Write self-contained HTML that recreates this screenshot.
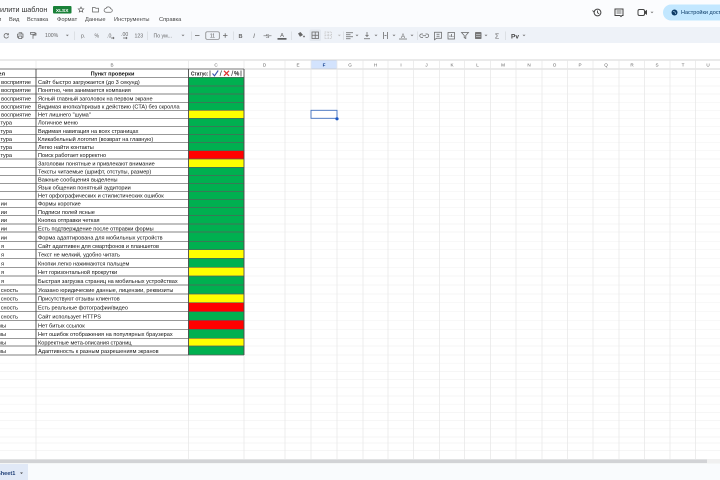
<!DOCTYPE html>
<html lang="ru">
<head>
<meta charset="utf-8">
<title>Sheet</title>
<style>
html,body{margin:0;padding:0;width:720px;height:480px;overflow:hidden;background:#fff}
svg{display:block;position:absolute;left:0;top:0;filter:blur(.25px)}
text{font-family:"Liberation Sans",sans-serif}
.t{font-size:5.58px;fill:#111}
.a{font-size:5.58px;fill:#111;text-anchor:end}
.h{font-size:4.6px;fill:#666;text-anchor:middle}
.m{font-size:5.7px;fill:#444}
.tb{font-size:5.2px;fill:#666}
.ic{fill:none;stroke:#666;stroke-width:.75}
.car{fill:#777}
.sep{stroke:#d5d9dd;stroke-width:.7}
</style>
</head>
<body>
<svg width="720" height="480" viewBox="0 0 720 480" xmlns="http://www.w3.org/2000/svg">
<!-- chrome backgrounds -->
<rect x="0" y="0" width="720" height="27" fill="#fbfcfe"/>
<rect x="0" y="27" width="720" height="16" fill="#eef2f8"/>
<rect x="0" y="43" width="720" height="17" fill="#fff"/>

<!-- title -->
<text x="0" y="12" font-size="7.200" fill="#333">илити шаблон</text>
<rect x="53" y="6" width="18.500" height="7.500" rx="1" fill="#188038"/>
<text x="62.200" y="11.800" font-size="4.800" font-weight="bold" fill="#fff" text-anchor="middle">XLSX</text>
<path class="ic" d="M81 7l.8 1.700 1.900.2-1.400 1.300.4 1.800-1.700-.9-1.700.9.400-1.800-1.400-1.300 1.900-.2z"/>
<path class="ic" d="M92.500 7.500h2.500l.8.8h2.700v3.700h-6z"/>
<path class="ic" d="M106 12.200h4.500a1.700 1.700 0 0 0 .2-3.400 2.500 2.500 0 0 0-4.700-.4 1.900 1.900 0 0 0 0 3.800z"/>

<!-- menu -->
<text class="m" x="-2" y="21">л</text>
<text class="m" x="9" y="21">Вид</text>
<text class="m" x="27" y="21">Вставка</text>
<text class="m" x="57" y="21">Формат</text>
<text class="m" x="85" y="21">Данные</text>
<text class="m" x="114" y="21">Инструменты</text>
<text class="m" x="159" y="21">Справка</text>

<!-- top right -->
<circle cx="597.500" cy="12.500" r="3.400" fill="none" stroke="#444" stroke-width="1"/>
<path d="M597.500 10.500v2.300l1.600 1M592.500 10.500l1.500 1.600 1-1.800" fill="none" stroke="#444" stroke-width=".9"/>
<path d="M615 9h8v6.500h-1l-1 1-1-1h-5z" fill="none" stroke="#444" stroke-width="1"/>
<path d="M616.500 11h5M616.500 13h5" stroke="#444" stroke-width=".8"/>
<rect x="638" y="9.500" width="6.500" height="6" rx="1.500" fill="none" stroke="#444" stroke-width="1"/>
<path d="M644.500 11.500l2.500-1.700v5.200l-2.500-1.700z" fill="#444"/>
<path class="car" d="M650.500 11.800h3l-1.500 1.500z"/>
<rect x="663" y="4.500" width="80" height="16" rx="8" fill="#c2e7ff"/>
<circle cx="674.500" cy="12.500" r="3" fill="#0b3a66"/>
<path d="M673 11.500l2 .5.500 2" stroke="#c2e7ff" stroke-width=".6" fill="none"/>
<text x="681" y="14" font-size="5.500" fill="#0b3a66">Настройки дост</text>

<!-- toolbar -->
<g>
<path class="ic" d="M8 34.200a2.300 2.300 0 1 0 .5 2.300M8.400 33.200v1.700h-1.700"/>
<path class="ic" d="M17.500 34h5.500v3.300h-1.200M18.700 37.300h-1.200V34M18.700 32.800h3.100V34M18.700 36h3.100v2.500h-3.100z"/>
<path class="ic" d="M30.500 32.500h4.500v1.800h-4.500zM35 33.300h1v1.800h-3v1M33 36.100v2.700" stroke-width="1"/>
<text class="tb" x="45" y="37.200">100%</text>
<path class="car" d="M65.800 34.800h3l-1.500 1.500z"/>
<line class="sep" x1="74.500" y1="31.500" x2="74.500" y2="40"/>
<text class="tb" x="81" y="37.300">р.</text>
<text class="tb" x="94.500" y="37.300">%</text>
<text class="tb" x="107" y="37.300">.0</text>
<path class="ic" d="M111 38h3M113 37l1 1-1 1" stroke-width=".6"/>
<text class="tb" x="121" y="36" font-size="4.600">.00</text>
<path class="ic" d="M123 38h4M126 37l1 1-1 1" stroke-width=".6"/>
<text class="tb" x="134.500" y="37.300" font-size="4.700">123</text>
<line class="sep" x1="147.500" y1="31.500" x2="147.500" y2="40"/>
<text class="tb" x="153.500" y="37.300">По ум...</text>
<path class="car" d="M181.500 34.800h3l-1.500 1.500z"/>
<line class="sep" x1="191.500" y1="31.500" x2="191.500" y2="40"/>
<path d="M195 35.500h4.500" stroke="#666" stroke-width=".8"/>
<rect x="205.800" y="31.800" width="13.500" height="7.500" rx="1.300" fill="none" stroke="#777" stroke-width=".7"/>
<text x="212.500" y="37.300" font-size="5" fill="#555" text-anchor="middle">11</text>
<path d="M223 35.500h4.500M225.200 33.200v4.600" stroke="#666" stroke-width=".8"/>
<line class="sep" x1="233.500" y1="31.500" x2="233.500" y2="40"/>
<text x="240.500" y="37.800" font-size="5.600" font-weight="bold" fill="#666" text-anchor="middle">B</text>
<text x="254" y="37.800" font-size="6.500" font-style="italic" font-family="Liberation Serif" fill="#666" text-anchor="middle">I</text>
<text x="267.500" y="37.800" font-size="5.600" fill="#666" text-anchor="middle">S</text>
<path d="M263.500 35.800h8" stroke="#666" stroke-width=".6"/>
<text x="282" y="37" font-size="5.800" fill="#666" text-anchor="middle">A</text>
<rect x="277.500" y="38.300" width="9" height="1.200" fill="#222"/>
<line class="sep" x1="291.500" y1="31.500" x2="291.500" y2="40"/>
<path d="M298 33.500l2.500-1.500 2.500 3-3 1.800z" fill="#666"/>
<circle cx="304" cy="36.500" r=".9" fill="#666"/>
<rect x="309.500" y="29.500" width="11.500" height="11.500" rx="1.500" fill="#e2e7ee"/>
<path class="ic" d="M312 32h6.500v6.500H312zM315.200 32v6.500M312 35.200h6.500"/>
<path d="M325 32h6.500v6.500H325zM328.200 32v6.500M325 35.200h6.500" fill="none" stroke="#c4c4c4" stroke-width=".8" stroke-dasharray="1 .7"/>
<path d="M337.800 34.800h3l-1.500 1.500z" fill="#bbb"/>
<line class="sep" x1="343.500" y1="31.500" x2="343.500" y2="40"/>
<path class="ic" d="M346 32.700h7M346 34.700h4.500M346 36.700h7M346 38.700h4.500"/>
<path class="car" d="M355.500 34.800h3l-1.500 1.500z"/>
<path class="ic" d="M364 38.800h6M367 32v4.500M365.500 35l1.500 1.500 1.500-1.500"/>
<path class="car" d="M374.500 34.800h3l-1.500 1.500z"/>
<path class="ic" d="M383.500 32v7M387.500 32v7M384.500 35.500h2"/>
<path class="car" d="M392.500 34.800h3l-1.500 1.500z"/>
<text x="403" y="38" font-size="6" fill="#666" text-anchor="middle">A</text>
<path class="ic" d="M399 39h8" stroke-width=".6"/>
<path class="car" d="M410.500 34.800h3l-1.500 1.500z"/>
<line class="sep" x1="417.500" y1="31.500" x2="417.500" y2="40"/>
<path class="ic" d="M423 34h-1.500a1.700 1.700 0 0 0 0 3.400h1.500M425.500 34h1.500a1.700 1.700 0 0 1 0 3.400h-1.500M422.500 35.700h3.500"/>
<path class="ic" d="M434.500 32.300h7v6h-5l-2 1.500zM436.500 34.300h3M436.500 36.300h3"/>
<path class="ic" d="M448 32.500h6.500V39H448zM450 37v-1.500M451.500 37v-3M453 37v-1"/>
<path class="ic" d="M461.500 32.500h7l-2.700 3v3l-1.600-.9v-2.100z"/>
<rect x="475" y="32" width="6.500" height="7" rx=".8" fill="#777"/>
<path d="M476 34.500h4.500M476 36.500h4.500" stroke="#eef2f8" stroke-width=".6"/>
<path class="car" d="M484.500 34.800h3l-1.500 1.500z"/>
<text x="497" y="38.300" font-size="7" fill="#666" text-anchor="middle">Σ</text>
<line class="sep" x1="505.500" y1="31.500" x2="505.500" y2="40"/>
<text x="511" y="38.300" font-size="6.500" font-weight="bold" fill="#444">Рv</text>
<path class="car" d="M522.500 34.800h3l-1.500 1.500z"/>
</g>

<!-- column header -->
<rect x="0" y="60" width="720" height="9" fill="#fff"/>
<rect x="311" y="60" width="26" height="9" fill="#d3e3fd"/>
<path d="M0 60H720M0 69H720" stroke="#c8c8c8" stroke-width=".7" fill="none"/>

<!-- empty-area horizontal lines -->
<path stroke="#f3f3f3" stroke-width=".7" fill="none" d="M244 77.300H720M244 86H720M244 94H720M244 102.300H720M244 110.300H720M244 118.300H720M244 126.300H720M244 134.700H720M244 142.700H720M244 150.700H720M244 159H720M244 167.300H720M244 175.300H720M244 183.300H720M244 191.300H720M244 199.300H720M244 207.300H720M244 215.700H720M244 224H720M244 232H720M244 241.700H720M244 249.700H720M244 258.300H720M244 267.300H720M244 276H720M244 285H720M244 294H720M244 302.700H720M244 311.700H720M244 320.300H720M244 329.300H720M244 338.300H720M244 346H720M0 355H720M0 363.200H720M0 371.400H720M0 379.600H720M0 387.800H720M0 396H720M0 404.200H720M0 412.400H720M0 420.600H720M0 428.800H720M0 437H720M0 443H720M0 450.500H720"/>
<!-- vertical lines -->
<path stroke="#e6e6e6" stroke-width=".7" fill="none" d="M36 60V459M188.500 60V459M244 60V459M285 60V459M311 60V459M337 60V459M363 60V459M388 60V459M413.500 60V459M439.500 60V459M464.500 60V459M490.500 60V459M516 60V459M542 60V459M567.500 60V459M593 60V459M619 60V459M644.500 60V459M670 60V459M695.500 60V459"/>

<!-- column letters -->
<text class="h" x="112" y="66.300">B</text>
<text class="h" x="216" y="66.300">C</text>
<text class="h" x="264.500" y="66.300">D</text>
<text class="h" x="298" y="66.300">E</text>
<text class="h" x="324" y="66.300" style="fill:#0b3a8a;font-weight:bold">F</text>
<text class="h" x="350" y="66.300">G</text>
<text class="h" x="375.500" y="66.300">H</text>
<text class="h" x="401" y="66.300">I</text>
<text class="h" x="426.500" y="66.300">J</text>
<text class="h" x="452" y="66.300">K</text>
<text class="h" x="477.500" y="66.300">L</text>
<text class="h" x="503" y="66.300">M</text>
<text class="h" x="529" y="66.300">N</text>
<text class="h" x="554.500" y="66.300">O</text>
<text class="h" x="580" y="66.300">P</text>
<text class="h" x="606" y="66.300">Q</text>
<text class="h" x="632" y="66.300">R</text>
<text class="h" x="657" y="66.300">S</text>
<text class="h" x="683" y="66.300">T</text>
<text class="h" x="708" y="66.300">U</text>

<!-- status fills -->
<rect x="188.500" y="77.300" width="55.500" height="277.700" fill="#00b050"/>
<rect x="188.500" y="110.300" width="55.500" height="8" fill="#ffff00"/>
<rect x="188.500" y="150.700" width="55.500" height="8.300" fill="#ff0000"/>
<rect x="188.500" y="159" width="55.500" height="8.300" fill="#ffff00"/>
<rect x="188.500" y="249.700" width="55.500" height="8.600" fill="#ffff00"/>
<rect x="188.500" y="267.300" width="55.500" height="8.700" fill="#ffff00"/>
<rect x="188.500" y="294" width="55.500" height="8.700" fill="#ffff00"/>
<rect x="188.500" y="302.700" width="55.500" height="9" fill="#ff0000"/>
<rect x="188.500" y="320.300" width="55.500" height="9" fill="#ff0000"/>
<rect x="188.500" y="338.300" width="55.500" height="7.700" fill="#ffff00"/>

<!-- table rules -->
<path stroke="#5a5a5a" stroke-width=".7" fill="none" d="M0 69H244M0 77.300H244M0 86H244M0 94H244M0 102.300H244M0 110.300H244M0 118.300H244M0 126.300H244M0 134.700H244M0 142.700H244M0 150.700H244M0 159H244M0 167.300H244M0 175.300H244M0 183.300H244M0 191.300H244M0 199.300H244M0 207.300H244M0 215.700H244M0 224H244M0 232H244M0 241.700H244M0 249.700H244M0 258.300H244M0 267.300H244M0 276H244M0 285H244M0 294H244M0 302.700H244M0 311.700H244M0 320.300H244M0 329.300H244M0 338.300H244M0 346H244M0 355H244"/>
<path stroke="#4a4a4a" stroke-width=".9" fill="none" d="M36 69V355M188.500 69V355M244 69V355"/>

<!-- header row -->
<text class="a" x="5" y="75.300" font-weight="bold">ел</text>
<text x="112.500" y="75.300" font-size="5.580" font-weight="bold" fill="#111" text-anchor="middle">Пункт проверки</text>
<text x="191" y="75.300" font-size="5.580" font-weight="bold" fill="#111" textLength="17.500" lengthAdjust="spacingAndGlyphs">Статус:</text>
<path d="M210 70.500v6" stroke="#222" stroke-width=".7"/>
<path d="M212.500 73.500l2 2.300 3.700-5.300" fill="none" stroke="#3a55b0" stroke-width="1.100"/>
<path d="M220 76l1.500-5.500" stroke="#333" stroke-width=".6"/>
<path d="M224 70.800l5 5M229 70.800l-5 5" stroke="#e03030" stroke-width="1.200"/>
<path d="M231.500 76l1.500-5.500" stroke="#333" stroke-width=".6"/>
<text x="234" y="75.500" font-size="6" font-weight="bold" fill="#222">%</text>
<path d="M241 70.500v6" stroke="#222" stroke-width=".7"/>

<!-- column A clipped -->
<g>
<text class="a" x="31" y="84">восприятие</text>
<text class="a" x="31" y="92.200">восприятие</text>
<text class="a" x="31" y="100.400">восприятие</text>
<text class="a" x="31" y="108.600">восприятие</text>
<text class="a" x="31" y="116.600">восприятие</text>
<text class="a" x="12" y="124.600">тура</text>
<text class="a" x="12" y="132.800">тура</text>
<text class="a" x="12" y="141">тура</text>
<text class="a" x="12" y="149">тура</text>
<text class="a" x="12" y="157">тура</text>
<text class="a" x="7" y="205.500">ии</text>
<text class="a" x="7" y="213.800">ии</text>
<text class="a" x="7" y="222">ии</text>
<text class="a" x="7" y="230.300">ии</text>
<text class="a" x="7" y="239.700">ии</text>
<text class="a" x="4" y="248">я</text>
<text class="a" x="4" y="256.500">я</text>
<text class="a" x="4" y="265.500">я</text>
<text class="a" x="4" y="274">я</text>
<text class="a" x="4" y="283">я</text>
<text class="a" x="18" y="292">сность</text>
<text class="a" x="18" y="300.700">сность</text>
<text class="a" x="18" y="309.700">сность</text>
<text class="a" x="18" y="318.300">сность</text>
<text class="a" x="6" y="327.300">мы</text>
<text class="a" x="6" y="336">мы</text>
<text class="a" x="6" y="344.300">мы</text>
<text class="a" x="6" y="353">мы</text>
</g>

<!-- column B -->
<text class="t" x="38" y="84">Сайт быстро загружается (до 3 секунд)</text>
<text class="t" x="38" y="92.200">Понятно, чем занимается компания</text>
<text class="t" x="38" y="100.400">Ясный главный заголовок на первом экране</text>
<text class="t" x="38" y="108.600">Видимая кнопка/призыв к действию (CTA) без скролла</text>
<text class="t" x="38" y="116.600">Нет лишнего "шума"</text>
<text class="t" x="38" y="124.600">Логичное меню</text>
<text class="t" x="38" y="132.800">Видимая навигация на всех страницах</text>
<text class="t" x="38" y="141">Кликабельный логотип (возврат на главную)</text>
<text class="t" x="38" y="149">Легко найти контакты</text>
<text class="t" x="38" y="157">Поиск работает корректно</text>
<text class="t" x="38" y="165.300">Заголовки понятные и привлекают внимание</text>
<text class="t" x="38" y="173.500">Тексты читаемые (шрифт, отступы, размер)</text>
<text class="t" x="38" y="181.500">Важные сообщения выделены</text>
<text class="t" x="38" y="189.500">Язык общения понятный аудитории</text>
<text class="t" x="38" y="197.500">Нет орфографических и стилистических ошибок</text>
<text class="t" x="38" y="205.500">Формы короткие</text>
<text class="t" x="38" y="213.800">Подписи полей ясные</text>
<text class="t" x="38" y="222">Кнопка отправки четкая</text>
<text class="t" x="38" y="230.300">Есть подтверждение после отправки формы</text>
<text class="t" x="38" y="239.700">Форма адаптирована для мобильных устройств</text>
<text class="t" x="38" y="248">Сайт адаптивен для смартфонов и планшетов</text>
<text class="t" x="38" y="256.500">Текст не мелкий, удобно читать</text>
<text class="t" x="38" y="265.500">Кнопки легко нажимаются пальцем</text>
<text class="t" x="38" y="274">Нет горизонтальной прокрутки</text>
<text class="t" x="38" y="283">Быстрая загрузка страниц на мобильных устройствах</text>
<text class="t" x="38" y="292">Указано юридические данные, лицензии, реквизиты</text>
<text class="t" x="38" y="300.700">Присутствуют отзывы клиентов</text>
<text class="t" x="38" y="309.700">Есть реальные фотографии/видео</text>
<text class="t" x="38" y="318.300">Сайт использует HTTPS</text>
<text class="t" x="38" y="327.300">Нет битых ссылок</text>
<text class="t" x="38" y="336">Нет ошибок отображения на популярных браузерах</text>
<text class="t" x="38" y="344.300">Корректные мета-описания страниц</text>
<text class="t" x="38" y="353">Адаптивность к разным разрешениям экранов</text>

<!-- selection -->
<rect x="311" y="110.300" width="26" height="8" fill="none" stroke="#3f6fbf" stroke-width=".9"/>
<circle cx="337" cy="118.800" r="1.600" fill="#1a56c4"/>

<!-- scrollbar and bottom bar -->
<rect x="0" y="459" width="720" height="4.500" fill="#f0f0f0"/>
<rect x="0" y="459.500" width="707" height="3.500" fill="#d2d3d6"/>
<rect x="0" y="463.500" width="720" height="16.500" fill="#f9fbfd"/>
<rect x="0" y="464" width="28" height="16" fill="#e1e9f7"/>
<text x="-3" y="475" font-size="5.600" font-weight="bold" fill="#1f3f77">Sheet1</text>
<path d="M20 472.500h3l-1.500 1.500z" fill="#444"/>
</svg>
</body>
</html>
